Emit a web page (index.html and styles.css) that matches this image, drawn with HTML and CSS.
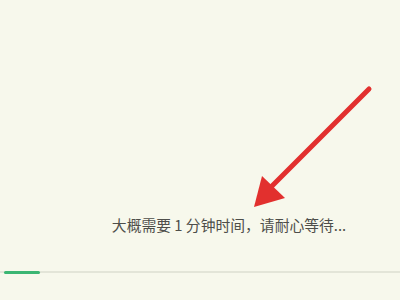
FILE: index.html
```html
<!DOCTYPE html>
<html lang="zh-CN">
<head>
    <meta charset="UTF-8">
    <meta name="viewport" content="width=device-width, initial-scale=1.0">
    <title>加载中</title>
    <link rel="stylesheet" href="styles.css">
</head>
<body>
    <div class="screen">
        <div class="spacer"></div>
        <p class="wait-text">大概需要 1 分钟时间，请耐心等待...</p>
        <div class="progress">
            <div class="progress-fill" style="width: 36px"></div>
        </div>
        <svg class="arrow" width="400" height="300" viewBox="0 0 400 300">
            <line x1="369" y1="89" x2="270" y2="188" stroke="#e2302e" stroke-width="5" stroke-linecap="round"/>
            <polygon points="254,207 262,176 285,198" fill="#e2302e"/>
        </svg>
    </div>
</body>
</html>
```

FILE: styles.css
```css
body {
    margin: 0;
    background-color: #f7f8ec;
    font-family: "Noto Sans CJK SC", "Noto Sans", sans-serif;
}

.screen {
    position: relative;
    width: 400px;
    height: 300px;
    display: flex;
    flex-direction: column;
    overflow: hidden;
}

.spacer {
    height: 213px;
}

.wait-text {
    margin: 0;
    text-align: center;
    font-size: 14.8px;
    line-height: 24px;
    color: #4e4e4a;
    padding-left: 58px;
}

.progress {
    margin-top: 34px;
    height: 2px;
    background-color: #e3e5d8;
}

.progress-fill {
    height: 3px;
    margin-left: 4px;
    margin-top: -0.5px;
    border-radius: 2px;
    background-color: #3bb673;
}

.arrow {
    position: absolute;
    top: 0;
    left: 0;
}
```
